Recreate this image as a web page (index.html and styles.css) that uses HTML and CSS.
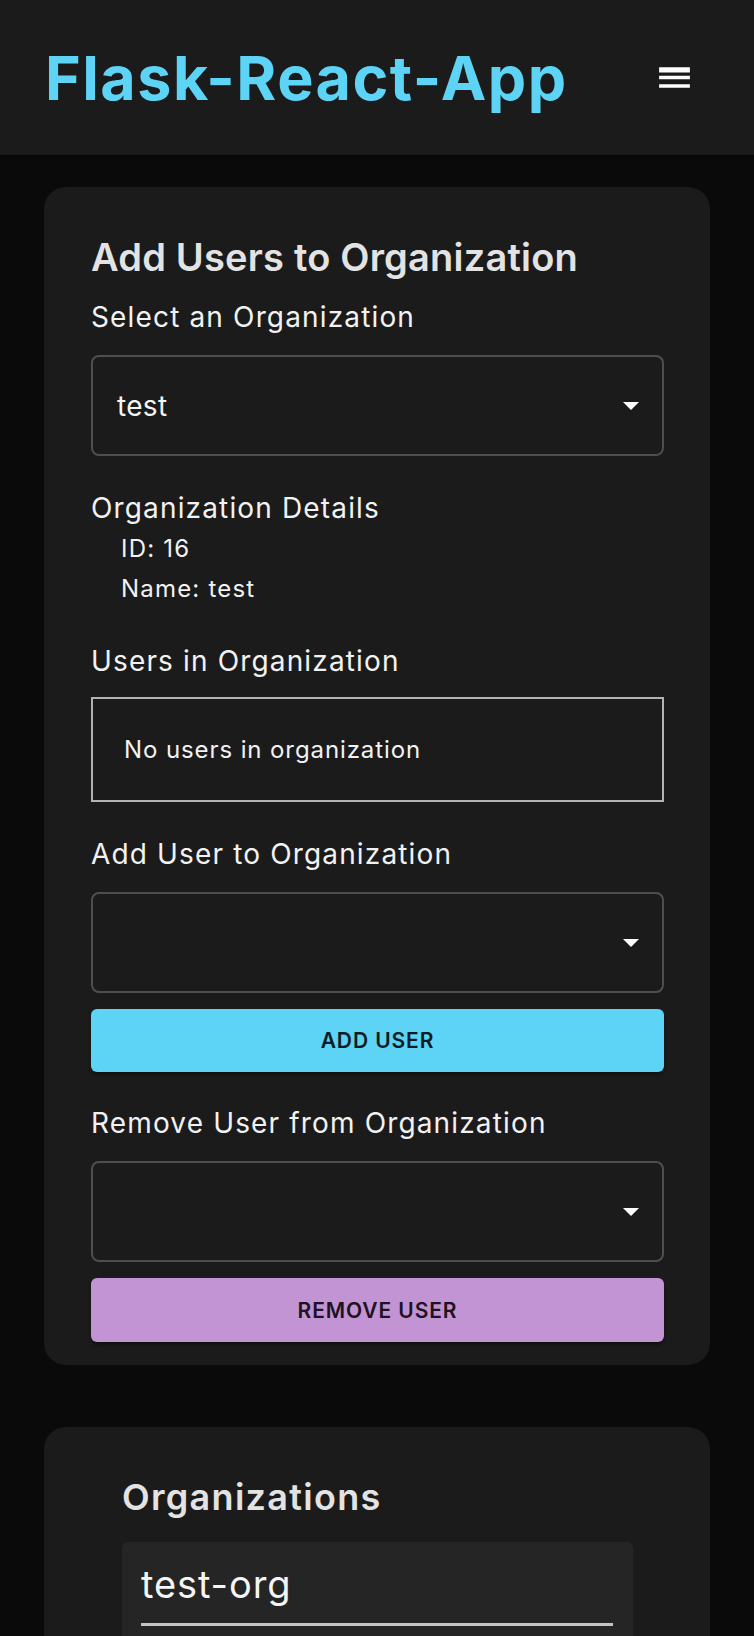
FILE: index.html
```html
<!DOCTYPE html>
<html lang="en">
<head>
<meta charset="utf-8">
<title>Flask-React-App</title>
<link rel="stylesheet" href="styles.css">
</head>
<body>
<header class="app-bar">
  <h1 class="brand">Flask-React-App</h1>
  <button class="menu-btn" aria-label="menu">
    <svg viewBox="0 0 24 24" width="41" height="41"><path fill="#ffffff" d="M3 18h18v-2H3v2zm0-5h18v-2H3v2zm0-6v2h18V6H3z"/></svg>
  </button>
</header>
<main class="main">
  <section class="card">
    <h2 class="card-title">Add Users to Organization</h2>
    <div class="label">Select an Organization</div>
    <div class="select">
      <span class="select-value">test</span>
      <svg class="arrow" viewBox="0 0 16 8" width="16" height="8"><polygon points="0,0 16,0 8,8" fill="#ffffff"/></svg>
    </div>

    <div class="section">
      <div class="label">Organization Details</div>
      <ul class="details">
        <li>ID: 16</li>
        <li>Name: test</li>
      </ul>
    </div>

    <div class="section">
      <div class="label">Users in Organization</div>
      <div class="users-box">No users in organization</div>
    </div>

    <div class="section">
      <div class="label">Add User to Organization</div>
      <div class="select">
        <span class="select-value"></span>
        <svg class="arrow" viewBox="0 0 16 8" width="16" height="8"><polygon points="0,0 16,0 8,8" fill="#ffffff"/></svg>
      </div>
      <button class="btn btn-cyan">ADD USER</button>
    </div>

    <div class="section section-last">
      <div class="label">Remove User from Organization</div>
      <div class="select">
        <span class="select-value"></span>
        <svg class="arrow" viewBox="0 0 16 8" width="16" height="8"><polygon points="0,0 16,0 8,8" fill="#ffffff"/></svg>
      </div>
      <button class="btn btn-purple">REMOVE USER</button>
    </div>
  </section>

  <section class="card card-orgs">
    <h2 class="orgs-title">Organizations</h2>
    <div class="org-item">
      <div class="org-input">test-org</div>
    </div>
  </section>
</main>
</body>
</html>
```
FILE: styles.css
```css
* { box-sizing: border-box; }

html, body {
  margin: 0;
  padding: 0;
  background: #0a0a0a;
  font-family: Inter, "Noto Sans", Roboto, sans-serif;
  color: #f2f2f2;
}

.app-bar {
  height: 155px;
  background: #1b1b1b;
  display: flex;
  align-items: center;
  justify-content: space-between;
  padding: 0 45px 0 45px;
  box-shadow: 0 2px 4px rgba(0,0,0,0.4);
}

.brand {
  margin: 0;
  font-size: 61px;
  line-height: 70px;
  font-weight: 700;
  color: #5dd3f5;
  letter-spacing: 1.5px;
}

.menu-btn {
  background: none;
  border: none;
  padding: 0;
  margin-right: 14px;
  width: 41px;
  height: 41px;
  display: flex;
  align-items: center;
  justify-content: center;
}

.menu-btn svg { display: block; }

.main {
  padding: 32px 44px 0;
  display: flex;
  flex-direction: column;
  gap: 62px;
}

.card {
  background: #1b1b1b;
  border-radius: 22px;
  padding: 47px 46px 23px 47px;
}

.card-title {
  margin: 0 0 17px;
  font-size: 38px;
  line-height: 46px;
  font-weight: 600;
  letter-spacing: 0.2px;
  color: #e3e3e3;
}

.label {
  font-size: 28px;
  line-height: 40px;
  font-weight: 400;
  letter-spacing: 1.15px;
  color: #f2f2f2;
}

.section { margin-top: 32px; }
.section-last { margin-top: 31px; }

.select {
  margin-top: 18px;
  height: 101px;
  border: 2px solid #4e4e4e;
  border-radius: 8px;
  display: flex;
  align-items: center;
  justify-content: space-between;
  padding: 0 23px 0 24px;
}

.select-value {
  font-size: 28px;
  letter-spacing: 0.3px;
  color: #f5f5f5;
}

.arrow { display: block; }

.details {
  list-style: none;
  margin: 1px 0 0;
  padding: 0 0 0 30px;
}

.details li {
  font-size: 24px;
  line-height: 40px;
  letter-spacing: 1.2px;
  color: #f2f2f2;
}

.users-box {
  margin-top: 16px;
  border: 2px solid #b3b3b3;
  padding: 30.5px 31px;
  font-size: 24px;
  line-height: 40px;
  letter-spacing: 0.9px;
  color: #f2f2f2;
}

.btn {
  display: block;
  width: 100%;
  height: 63px;
  margin-top: 16px;
  border: none;
  border-radius: 6px;
  font-family: Inter, "Noto Sans", Roboto, sans-serif;
  font-size: 21px;
  font-weight: 600;
  letter-spacing: 0.9px;
  box-shadow: 0 3px 3px rgba(0,0,0,0.35);
}

.btn-cyan { background: #5dd3f5; color: #0d1d24; }
.btn-purple { background: #c394d3; color: #1e1322; height: 64px; }

.card-orgs {
  padding: 48px 77px 0 78px;
  min-height: 240px;
}

.orgs-title {
  margin: 0 0 23px;
  font-size: 36px;
  line-height: 44px;
  font-weight: 600;
  letter-spacing: 1.3px;
  color: #e3e3e3;
}

.org-item {
  background: #252525;
  border-radius: 6px;
  padding: 16px 20px 20px 19px;
}

.org-input {
  font-size: 38px;
  line-height: 52px;
  letter-spacing: 0.9px;
  color: #f5f5f5;
  padding-bottom: 13px;
  border-bottom: 3px solid #c4c4c4;
}
```
